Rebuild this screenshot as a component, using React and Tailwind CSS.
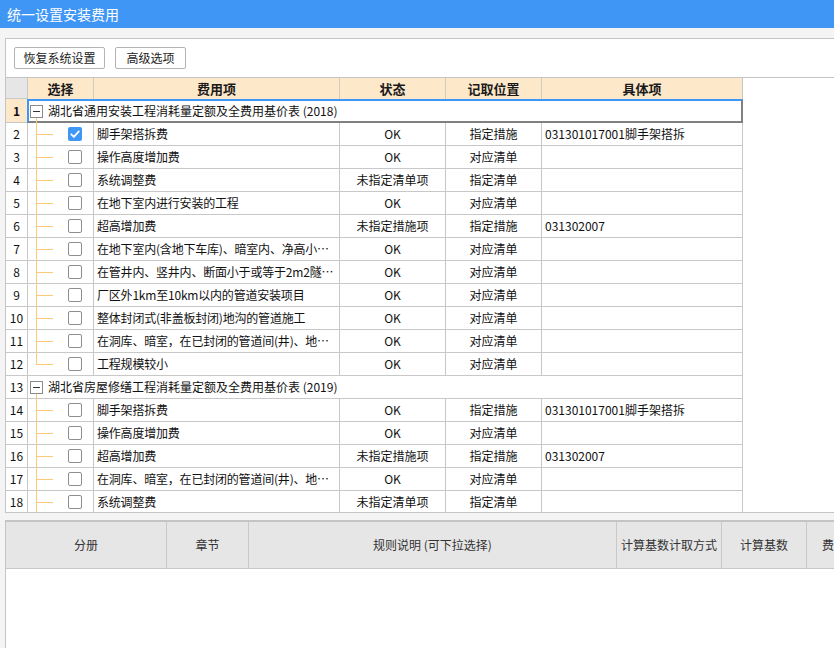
import React from 'react';

const rows = [
  { type: 'group', n: 1, text: '湖北省通用安装工程消耗量定额及全费用基价表 (2018)', selected: true },
  { n: 2, checked: true, fee: '脚手架搭拆费', status: 'OK', pos: '指定措施', detail: '031301017001脚手架搭拆' },
  { n: 3, fee: '操作高度增加费', status: 'OK', pos: '对应清单' },
  { n: 4, fee: '系统调整费', status: '未指定清单项', pos: '指定清单' },
  { n: 5, fee: '在地下室内进行安装的工程', status: 'OK', pos: '对应清单' },
  { n: 6, fee: '超高增加费', status: '未指定措施项', pos: '指定措施', detail: '031302007' },
  { n: 7, fee: '在地下室内(含地下车库)、暗室内、净高小…', status: 'OK', pos: '对应清单' },
  { n: 8, fee: '在管井内、竖井内、断面小于或等于2m2隧…', status: 'OK', pos: '对应清单' },
  { n: 9, fee: '厂区外1km至10km以内的管道安装项目', status: 'OK', pos: '对应清单' },
  { n: 10, fee: '整体封闭式(非盖板封闭)地沟的管道施工', status: 'OK', pos: '对应清单' },
  { n: 11, fee: '在洞库、暗室，在已封闭的管道间(井)、地…', status: 'OK', pos: '对应清单' },
  { n: 12, fee: '工程规模较小', status: 'OK', pos: '对应清单', last: true },
  { type: 'group', n: 13, text: '湖北省房屋修缮工程消耗量定额及全费用基价表 (2019)' },
  { n: 14, fee: '脚手架搭拆费', status: 'OK', pos: '指定措施', detail: '031301017001脚手架搭拆' },
  { n: 15, fee: '操作高度增加费', status: 'OK', pos: '对应清单' },
  { n: 16, fee: '超高增加费', status: '未指定措施项', pos: '指定措施', detail: '031302007' },
  { n: 17, fee: '在洞库、暗室，在已封闭的管道间(井)、地…', status: 'OK', pos: '对应清单' },
  { n: 18, fee: '系统调整费', status: '未指定清单项', pos: '指定清单' },
];

function Checkbox({ checked }) {
  if (checked) {
    return (
      <span className="ml-[40px] w-[14px] h-[14px] rounded-[2px] bg-[#3f97f5] flex items-center justify-center shrink-0">
        <svg width="14" height="14" viewBox="0 0 14 14">
          <path d="M3.3 7.3 L5.9 9.8 L10.8 4.4" fill="none" stroke="#fff" strokeWidth="1.8" strokeLinecap="round" strokeLinejoin="round" />
        </svg>
      </span>
    );
  }
  return <span className="ml-[40px] w-[14px] h-[14px] rounded-[2px] border border-[#8e8e8e] bg-white shrink-0" />;
}

function MinusBox() {
  return (
    <span className="relative z-10 w-[13px] h-[13px] border border-[#8a8a8a] bg-white flex items-center justify-center shrink-0">
      <span className="w-[7px] h-px bg-[#333]" />
    </span>
  );
}

function GroupRow({ r }) {
  if (r.selected) {
    return (
      <div className="flex h-[24px]">
        <div className="w-[21px] shrink-0 bg-[#fee8ca] border-b border-[#c8c8c8] flex items-center justify-center font-bold">{r.n}</div>
        <div className="w-[716px] shrink-0 relative flex items-center pl-[1px] border-t-2 border-l-2 border-t-[#3f97f5] border-l-[#3f97f5] border-r-2 border-b-2 border-r-[#808080] border-b-[#808080]">
          <span className="absolute left-[7px] top-[14px] bottom-[-2px] w-px bg-[#fcc978]" />
          <MinusBox />
          <span className="ml-[5px] whitespace-nowrap">{r.text}</span>
        </div>
      </div>
    );
  }
  return (
    <div className="flex h-[23px]">
      <div className="w-[22px] shrink-0 border-r border-b border-[#c8c8c8] flex items-center justify-center">{r.n}</div>
      <div className="w-[715px] shrink-0 relative flex items-center pl-[2px] border-r border-b border-[#c8c8c8]">
        <span className="absolute left-[8px] top-[14px] bottom-[-1px] w-px bg-[#fcc978]" />
        <MinusBox />
        <span className="ml-[5px] whitespace-nowrap">{r.text}</span>
      </div>
    </div>
  );
}

function DataRow({ r }) {
  return (
    <div className="flex h-[23px]">
      <div className="w-[22px] shrink-0 border-r border-b border-[#c8c8c8] flex items-center justify-center">{r.n}</div>
      <div className="w-[66px] shrink-0 relative flex items-center border-r border-b border-[#c8c8c8]">
        {r.last ? (
          <span className="absolute left-[8px] top-0 h-[12px] w-px bg-[#fcc978]" />
        ) : (
          <span className="absolute left-[8px] top-0 bottom-[-1px] w-px bg-[#fcc978]" />
        )}
        <span className="absolute left-[8px] top-[11px] w-[17px] h-px bg-[#fcc978]" />
        <Checkbox checked={r.checked} />
      </div>
      <div className="w-[246px] shrink-0 border-r border-b border-[#c8c8c8] pl-[3px] leading-[22px] whitespace-nowrap overflow-hidden tracking-[-0.2px]">{r.fee}</div>
      <div className="w-[106px] shrink-0 border-r border-b border-[#c8c8c8] leading-[22px] text-center whitespace-nowrap">{r.status}</div>
      <div className="w-[96px] shrink-0 border-r border-b border-[#c8c8c8] leading-[22px] text-center whitespace-nowrap">{r.pos}</div>
      <div className="w-[201px] shrink-0 border-r border-b border-[#c8c8c8] px-[3px] leading-[22px] whitespace-nowrap overflow-hidden">{r.detail || ''}</div>
    </div>
  );
}

export default function App() {
  return (
    <div className="w-[834px] h-[648px] overflow-hidden bg-[#f4f4f4] font-['Noto_Sans_CJK_SC',sans-serif] text-[12px] text-[#111] flex flex-col">
      <div className="h-[28px] shrink-0 bg-[#4096f5] text-white text-[14px] pl-[7px] flex items-center">统一设置安装费用</div>

      <div className="mt-[10px] ml-[5px] h-[475px] shrink-0 bg-white border-l border-t border-b border-[#c4c4c4] flex flex-col overflow-hidden">
        <div className="h-[38px] shrink-0 flex items-center gap-[10px] pl-[8px]">
          <button className="w-[91px] h-[22px] border border-[#b4b4b4] rounded-[2px] bg-white text-[12px] text-[#222] flex items-center justify-center">恢复系统设置</button>
          <button className="w-[71px] h-[22px] border border-[#b4b4b4] rounded-[2px] bg-white text-[12px] text-[#222] flex items-center justify-center">高级选项</button>
        </div>
        <div className="flex-1 border-t border-[#c4c4c4] overflow-hidden">
          <div className="flex h-[21px] font-bold text-[13px] text-[#1a1a1a]">
            <div className="w-[22px] shrink-0 bg-[#e6e6e6] border-r border-b border-[#c8c8c8]" />
            <div className="w-[66px] shrink-0 bg-[#fee8ca] border-r border-[#d4cbbd] flex items-center justify-center">选择</div>
            <div className="w-[246px] shrink-0 bg-[#fee8ca] border-r border-[#d4cbbd] flex items-center justify-center">费用项</div>
            <div className="w-[106px] shrink-0 bg-[#fee8ca] border-r border-[#d4cbbd] flex items-center justify-center">状态</div>
            <div className="w-[96px] shrink-0 bg-[#fee8ca] border-r border-[#d4cbbd] flex items-center justify-center">记取位置</div>
            <div className="w-[201px] shrink-0 bg-[#fee8ca] border-r border-[#c8c8c8] flex items-center justify-center">具体项</div>
          </div>
          {rows.map((r) => (r.type === 'group' ? <GroupRow key={r.n} r={r} /> : <DataRow key={r.n} r={r} />))}
        </div>
      </div>

      <div className="mt-[7px] ml-[5px] flex-1 bg-white border-l border-t-2 border-[#c4c4c4] overflow-hidden">
        <div className="flex h-[47px] bg-[#e6e6e6] border-b border-[#c8c8c8] text-[#333]">
          <div className="w-[161px] shrink-0 border-r border-[#c8c8c8] flex items-center justify-center">分册</div>
          <div className="w-[82px] shrink-0 border-r border-[#c8c8c8] flex items-center justify-center">章节</div>
          <div className="w-[368px] shrink-0 border-r border-[#c8c8c8] flex items-center justify-center">规则说明 (可下拉选择)</div>
          <div className="w-[105px] shrink-0 border-r border-[#c8c8c8] flex items-center justify-center whitespace-nowrap">计算基数计取方式</div>
          <div className="w-[85px] shrink-0 border-r border-[#c8c8c8] flex items-center justify-center">计算基数</div>
          <div className="w-[40px] shrink-0 flex items-center pl-[15px]">费</div>
        </div>
      </div>
    </div>
  );
}
